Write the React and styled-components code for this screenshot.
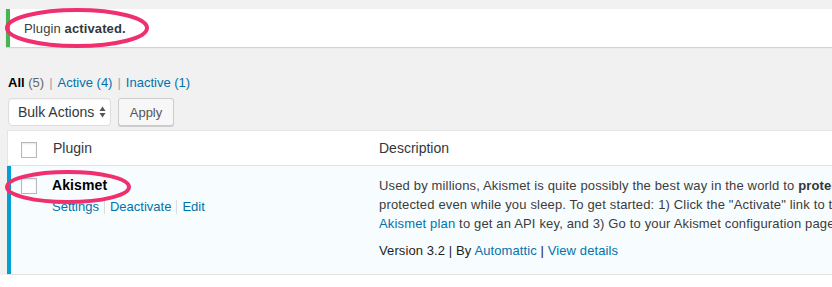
import React from "react";
import styled, { createGlobalStyle } from "styled-components";

const Global = createGlobalStyle`
  html, body { margin: 0; padding: 0; background: #f1f1f1; overflow: hidden; }
  body { font-family: "Liberation Sans", Arial, sans-serif; font-size: 13px; color: #444; }
  #root { width: 832px; height: 287px; overflow: hidden; position: relative; }
`;

const Page = styled.div`
  position: relative;
  width: 1200px;
  height: 287px;
  display: flex;
  flex-direction: column;
  background: #f1f1f1;
`;

const Notice = styled.div`
  margin: 9px 0 0 6px;
  height: 38px;
  background: #fff;
  border-left: 4px solid #46b450;
  box-shadow: 0 1px 1px 0 rgba(0, 0, 0, 0.12);
  display: flex;
  align-items: center;
  padding: 1px 0 0 14px;
  box-sizing: border-box;
  font-size: 13px;
  letter-spacing: 0.12px;
  color: #3a3f44;
  strong { font-weight: 700; color: #32373c; }
`;

const SubRow = styled.div`
  display: grid;
  grid-template-columns: 822px 260px;
  align-items: start;
  margin-top: 15px;
  padding-left: 8px;
`;

const SubSub = styled.div`
  margin-top: 11px;
  line-height: 20px;
  font-size: 13px;
  color: #666;
  display: flex;
  align-items: center;
  white-space: nowrap;
`;

const Current = styled.span`
  color: #000;
  font-weight: 700;
`;

const Count = styled.span`
  color: ${(p) => (p.$link ? "#0073aa" : "#666")};
`;

const Link = styled.a`
  color: #0073aa;
  text-decoration: none;
`;

const Sep = styled.span`
  color: #a0a5aa;
  margin: 0 5px;
`;

const SearchBox = styled.div`
  height: 28px;
  margin-left: 2px;
  border: 1px solid #ddd;
  background: #fff;
`;

const TableNav = styled.div`
  display: flex;
  gap: 7px;
  margin: 5px 0 0 8px;
  height: 28px;
`;

const Select = styled.div`
  box-sizing: border-box;
  width: 103px;
  height: 28px;
  background: #fff;
  border: 1px solid #ddd;
  border-radius: 4px;
  box-shadow: inset 0 1px 2px rgba(0, 0, 0, 0.04);
  display: flex;
  align-items: center;
  justify-content: space-between;
  padding: 0 4px 0 9px;
  font-size: 14px;
  color: #32373c;
`;

const Button = styled.div`
  box-sizing: border-box;
  width: 56px;
  height: 28px;
  background: #f7f7f7;
  border: 1px solid #ccc;
  border-radius: 3px;
  box-shadow: 0 1px 0 #ccc;
  display: flex;
  align-items: center;
  justify-content: center;
  font-size: 13px;
  color: #555;
`;

const Table = styled.div`
  margin: 4px 0 0 7px;
  background: #fff;
  border-top: 1px solid #e5e5e5;
  border-right: 1px solid #e5e5e5;
  display: flex;
  flex-direction: column;
`;

const Row = styled.div`
  display: grid;
  grid-template-columns: 37px 325px 1fr;
  background: ${(p) => (p.$active ? "#f7fcfe" : "#fff")};
  box-shadow: inset ${(p) => (p.$active ? "4px 0 0 #00a0d2" : "1px 0 0 #e5e5e5")};
  border-bottom: 1px solid #e1e1e1;
  height: ${(p) => p.$h}px;
`;

const CheckCell = styled.div`
  padding: ${(p) => p.$top}px 0 0 14px;
`;

const Checkbox = styled.span`
  display: block;
  box-sizing: border-box;
  width: 16px;
  height: 16px;
  border: 1px solid #b4b9be;
  background: #fff;
  box-shadow: inset 0 1px 2px rgba(0, 0, 0, 0.1);
`;

const HeadCell = styled.div`
  padding-left: ${(p) => p.$pad}px;
  display: flex;
  align-items: center;
  font-size: 14px;
  color: #32373c;
`;

const PluginCell = styled.div`
  padding: 10px 0 0 8px;
`;

const PluginName = styled.strong`
  display: block;
  font-size: 14px;
  line-height: 19px;
  font-weight: 700;
  letter-spacing: 0.1px;
  color: #000;
  margin-bottom: 2px;
`;

const RowActions = styled.div`
  line-height: 19px;
  font-size: 13px;
  display: flex;
  align-items: center;
`;

const ActionSep = styled.span`
  display: inline-block;
  width: 1px;
  height: 14px;
  background: #ddd;
  margin: 0 5px;
`;

const DescCell = styled.div`
  padding: 10px 0 0 10px;
  font-size: 13px;
  letter-spacing: 0.16px;
  white-space: nowrap;
  overflow: hidden;
`;

const DescText = styled.p`
  margin: 0;
  line-height: 19px;
  color: #3c3c3c;
  strong { font-weight: 700; color: #32373c; }
`;

const Meta = styled.p`
  margin: 8px 0 0;
  line-height: 19px;
  letter-spacing: 0.1px;
  color: #1e1e1e;
`;

const Bottom = styled.div`
  flex: 1;
  background: #fff;
`;

const Mark = styled.svg`
  position: absolute;
  left: ${(p) => p.$x}px;
  top: ${(p) => p.$y}px;
  overflow: visible;
  pointer-events: none;
`;

function Ellipse({ x, y, w, h }) {
  return (
    <Mark $x={x} $y={y} width={w} height={h} viewBox={`0 0 ${w} ${h}`}>
      <ellipse
        cx={w / 2}
        cy={h / 2}
        rx={w / 2 - 2}
        ry={h / 2 - 2}
        fill="none"
        stroke="#f0306e"
        strokeWidth="4"
      />
    </Mark>
  );
}

function SortArrows() {
  return (
    <svg width="7" height="12" viewBox="0 0 7 12">
      <path d="M3.5 0.5 L6.5 5 L0.5 5 Z" fill="#555" />
      <path d="M3.5 11.5 L6.5 7 L0.5 7 Z" fill="#555" />
    </svg>
  );
}

export default function App() {
  return (
    <>
      <Global />
      <Page>
        <Notice>
          <span>
            Plugin <strong>activated.</strong>
          </span>
        </Notice>
        <SubRow>
          <SubSub>
            <Current>All</Current>&nbsp;<Count>(5)</Count>
            <Sep>|</Sep>
            <Link href="#">Active</Link>&nbsp;<Count $link>(4)</Count>
            <Sep>|</Sep>
            <Link href="#">Inactive</Link>&nbsp;<Count $link>(1)</Count>
          </SubSub>
          <SearchBox />
        </SubRow>
        <TableNav>
          <Select>
            <span>Bulk Actions</span>
            <SortArrows />
          </Select>
          <Button>Apply</Button>
        </TableNav>
        <Table>
          <Row $h={34}>
            <CheckCell $top={11}>
              <Checkbox />
            </CheckCell>
            <HeadCell $pad={9}>Plugin</HeadCell>
            <HeadCell $pad={10}>Description</HeadCell>
          </Row>
          <Row $active $h={108}>
            <CheckCell $top={12}>
              <Checkbox />
            </CheckCell>
            <PluginCell>
              <PluginName>Akismet</PluginName>
              <RowActions>
                <Link href="#">Settings</Link>
                <ActionSep />
                <Link href="#">Deactivate</Link>
                <ActionSep />
                <Link href="#">Edit</Link>
              </RowActions>
            </PluginCell>
            <DescCell>
              <DescText>
                Used by millions, Akismet is quite possibly the best way in the world to{" "}
                <strong>protect your blog from spam</strong>. It keeps your site
                <br />
                protected even while you sleep. To get started: 1) Click the "Activate" link to the left of this description, 2) Sign up for an
                <br />
                <Link href="#">Akismet plan</Link> to get an API key, and 3) Go to your Akismet configuration page, and save your API key.
              </DescText>
              <Meta>
                Version 3.2 | By <Link href="#">Automattic</Link> | <Link href="#">View details</Link>
              </Meta>
            </DescCell>
          </Row>
        </Table>
        <Bottom />
        <Ellipse x={5} y={8} w={144} h={40} />
        <Ellipse x={5} y={170} w={126} h={34} />
      </Page>
    </>
  );
}
